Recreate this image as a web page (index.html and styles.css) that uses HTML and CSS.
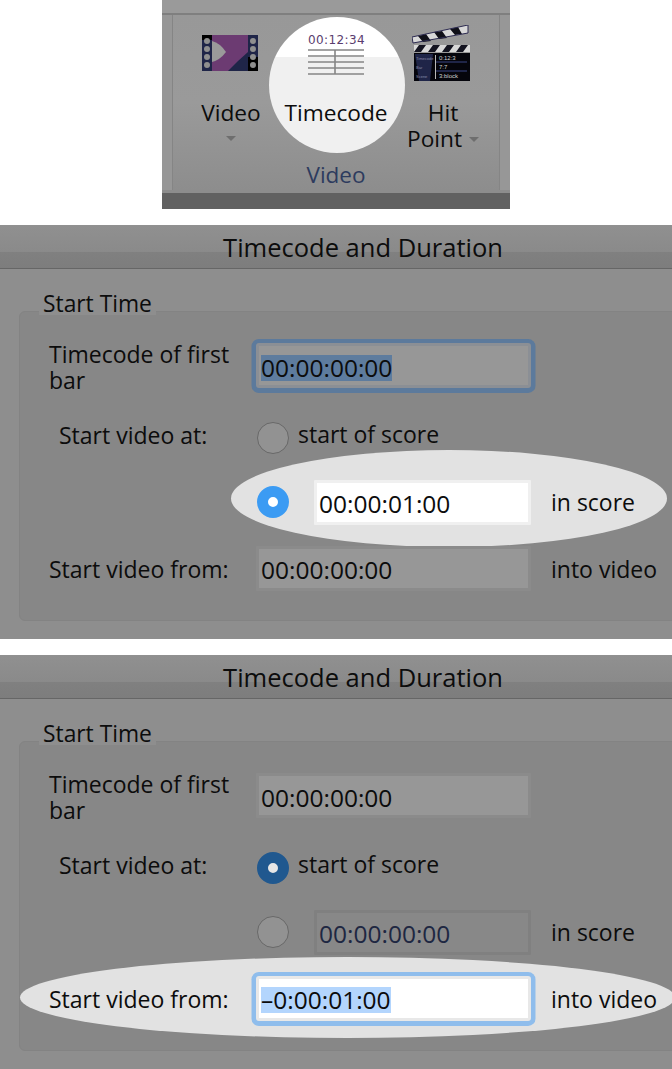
FILE: index.html
```html
<!DOCTYPE html>
<html lang="en">
<head>
<meta charset="utf-8">
<title>Timecode and Duration</title>
<link rel="stylesheet" href="styles.css">
</head>
<body>
<section class="ribbon">
  <div class="ribbon-top"></div>
  <div class="ribbon-body">
    <div class="tools">
      <div class="tool tool-video">
        <div class="icon icon-video">
          <svg width="56" height="36" viewBox="0 0 56 36">
            <rect width="56" height="36" fill="#1f2548"/>
            <rect x="0" y="0" width="10" height="5" fill="#000"/>
            <rect x="46" y="22" width="10" height="14" fill="#000"/>
            <rect x="10" width="36" height="36" fill="#6c3b72"/>
            <path d="M10 6 Q18 8 24 17 Q18 25 10 27Z" fill="#9a9a9a"/>
            <path d="M26 36 L36 26 L46 17 V36Z" fill="#1f2548"/>
            <g fill="#8f8f8f">
              <circle cx="5" cy="6" r="3"/><circle cx="5" cy="14" r="3"/><circle cx="5" cy="22" r="3"/><circle cx="5" cy="30" r="3"/>
              <circle cx="51" cy="6" r="3"/><circle cx="51" cy="14" r="3"/><circle cx="51" cy="22" r="3"/><circle cx="51" cy="30" r="3"/>
            </g>
          </svg>
        </div>
        <div class="tool-label">Video</div>
        <span class="caret caret-below"></span>
      </div>
      <div class="tool tool-timecode">
        <div class="spot"></div>
        <div class="icon">
          <div class="tc-icon">
            <div class="tc-time">00:12:34</div>
            <svg width="56" height="26" viewBox="0 0 56 26">
              <g stroke="#858585" stroke-width="1.6">
                <path d="M0 1H56M0 7H56M0 13H56M0 19H56M0 25H56"/>
                <path d="M27 1V25"/>
              </g>
            </svg>
          </div>
        </div>
        <div class="tool-label">Timecode</div>
      </div>
      <div class="tool tool-hit">
        <div class="icon icon-hit">
          <svg width="58" height="56" viewBox="0 0 58 56">
            <path d="M0 12 L56 0 L56 8 L1 18Z" fill="#d8d8d8"/>
            <path d="M6 11 L14 9 L19 16 L11 17ZM22 7 L30 6 L35 13 L27 14ZM38 4 L46 2 L50 9 L43 10Z" fill="#101018"/>
            <path d="M0 12 L56 0 L56 8 L1 18Z" fill="none" stroke="#2c2a50" stroke-width="1"/>
            <rect x="2" y="20" width="56" height="7" fill="#d8d8d8"/>
            <path d="M2 27 L7 20H14L9 27ZM16 27 L21 20H28L23 27ZM30 27 L35 20H42L37 27ZM44 27 L49 20H56L51 27Z" fill="#141420"/>
            <rect x="2" y="28" width="56" height="28" fill="#05050c"/>
            <path d="M3 29H21L18 56H7Z" fill="#1f2548"/>
            <rect x="23" y="30" width="1" height="24" fill="#b8b8b8"/>
            <rect x="24" y="36" width="31" height="2" fill="#1f2548"/>
            <rect x="24" y="45" width="31" height="2" fill="#1f2548"/>
            <g class="clap-text">
              <text x="4" y="35">Timecode</text>
              <text x="4" y="44">Bar</text>
              <text x="4" y="53">Scene</text>
            </g>
            <g class="clap-value">
              <text x="27" y="35">0:12:3</text>
              <text x="27" y="44">7:7</text>
              <text x="27" y="53">3:block</text>
            </g>
          </svg>
        </div>
        <div class="tool-label">Hit<br>Point<span class="caret caret-inline"></span></div>
      </div>
    </div>
    <div class="group-name">Video</div>
  </div>
  <div class="ribbon-foot"></div>
</section>

<section class="panel">
  <header class="panel-title">Timecode and Duration</header>
  <div class="group">
    <div class="legend">Start Time</div>
    <div class="ellipse ellipse-score"></div>
    <div class="row row-first">
      <label class="label label-two">Timecode of first<br>bar</label>
      <div class="field is-focus-dim"><span class="sel-dim">00:00:00:00</span></div>
    </div>
    <div class="row row-at">
      <label class="label label-indent">Start video at:</label>
      <div class="choice"><span class="radio"></span><span class="choice-text">start of score</span></div>
    </div>
    <div class="row row-score">
      <span></span>
      <div class="choice choice-field"><span class="radio radio-on"></span><div class="field field-short field-live">00:00:01:00</div></div>
      <span class="unit">in score</span>
    </div>
    <div class="row row-from">
      <label class="label">Start video from:</label>
      <div class="field">00:00:00:00</div>
      <span class="unit">into video</span>
    </div>
  </div>
</section>

<section class="panel">
  <header class="panel-title">Timecode and Duration</header>
  <div class="group">
    <div class="legend">Start Time</div>
    <div class="ellipse ellipse-from"></div>
    <div class="row row-first">
      <label class="label label-two">Timecode of first<br>bar</label>
      <div class="field">00:00:00:00</div>
    </div>
    <div class="row row-at">
      <label class="label label-indent">Start video at:</label>
      <div class="choice"><span class="radio radio-dark"></span><span class="choice-text">start of score</span></div>
    </div>
    <div class="row row-score">
      <span></span>
      <div class="choice choice-field"><span class="radio"></span><div class="field field-short field-off">00:00:00:00</div></div>
      <span class="unit">in score</span>
    </div>
    <div class="row row-from">
      <label class="label">Start video from:</label>
      <div class="field field-live is-focus"><span class="sel">–0:00:01:00</span></div>
      <span class="unit">into video</span>
    </div>
  </div>
</section>
</body>
</html>
```
FILE: styles.css
```css
* { box-sizing: border-box; }
html, body { margin: 0; padding: 0; background: #fff; }
body {
  width: 672px;
  overflow: hidden;
  font-family: "Open Sans", "Liberation Sans", sans-serif;
  color: #0c0c0c;
}

/* Ribbon */
.ribbon {
  width: 348px;
  height: 209px;
  margin-left: 162px;
  display: flex;
  flex-direction: column;
  background: #979797;
}
.ribbon-top {
  height: 15px;
  background: #9a9a9a;
  border-bottom: 2px solid #7f7f7f;
}
.ribbon-body {
  height: 175px;
  margin: 0 10px;
  padding: 10px 0 0 5px;
  border-left: 1px solid #858585;
  border-right: 1px solid #858585;
  background: linear-gradient(#989898, #9a9a9a 50%, #8d8d8d);
}
.ribbon-foot {
  flex: 1;
  background: linear-gradient(#8d8d8d 0, #8d8d8d 3px, #616161 3px);
}
.tools { display: flex; height: 127px; }
.tool {
  position: relative;
  display: flex;
  flex-direction: column;
  align-items: center;
}
.tool-video { width: 106px; }
.tool-timecode { width: 104px; }
.tool-hit { width: 110px; }
.icon {
  position: relative;
  height: 56px;
  margin-bottom: 19px;
  display: flex;
  align-items: center;
}
.icon-video { margin-left: -2px; }
.icon-hit { margin-left: -4px; }
.icon svg { display: block; }
.tool-label {
  position: relative;
  font-size: 22.7px;
  line-height: 26px;
  text-align: center;
  white-space: nowrap;
}
.spot {
  position: absolute;
  left: -15px;
  top: -8px;
  width: 136px;
  height: 136px;
  border-radius: 50%;
  background: linear-gradient(#fff 0, #fff 40px, #f0f0f0 40px);
}
.tc-icon { width: 56px; }
.tc-time {
  font-family: "DejaVu Sans", sans-serif;
  font-size: 12px;
  line-height: 16px;
  letter-spacing: 0.4px;
  color: #5a3d6e;
  text-align: center;
  white-space: nowrap;
  margin-bottom: 1px;
}
.clap-text text { font-family: "Liberation Sans", sans-serif; font-size: 4px; fill: #8a8aa8; }
.clap-value text { font-family: "Liberation Sans", sans-serif; font-size: 6px; fill: #d0d0d0; }
.caret {
  display: inline-block;
  width: 0;
  height: 0;
  border-left: 5px solid transparent;
  border-right: 5px solid transparent;
  border-top: 5px solid #6e6e6e;
}
.caret-below { margin-top: 10px; }
.caret-inline { margin-left: 7px; vertical-align: 5px; }
.group-name {
  font-size: 22.5px;
  line-height: 26px;
  text-align: center;
  color: #2d3b5e;
  margin-left: -5px;
  padding-top: 10px;
}

/* Panels */
.panel {
  position: relative;
  height: 414px;
  margin-top: 16px;
  overflow: hidden;
  background: #8e8e8e;
}
.panel-title {
  height: 44px;
  font-size: 25.5px;
  line-height: 45px;
  text-align: center;
  margin-bottom: 42px;
  padding-left: 54px;
  background: linear-gradient(#909090 0, #8a8a8a 27px, #808080 27px, #7d7d7d 43px);
  border-bottom: 1px solid #666;
}
.group {
  position: relative;
  width: 680px;
  height: 310px;
  margin-left: 19px;
  padding-top: 31px;
  background: #878787;
  border-radius: 6px;
  border: 1px solid #838383;
}
.legend {
  position: absolute;
  left: 19px;
  top: -21px;
  height: 24px;
  padding: 0 4px;
  font-size: 22.8px;
  line-height: 26px;
  background: #8e8e8e;
}
.ellipse {
  position: absolute;
  background: #e2e2e2;
  border-radius: 50%;
}
.ellipse-score { left: 211px; top: 138px; width: 436px; height: 97px; }
.ellipse-from { left: 0; top: 215px; width: 655px; height: 81px; }

.row {
  position: relative;
  display: grid;
  grid-template-columns: 236px 275px 1fr;
  align-items: center;
}
.row-first { grid-template-rows: 45px; height: 45px; }
.row-at { grid-template-rows: 33px; height: 33px; margin-top: 33px; }
.row-score { grid-template-rows: 46px; height: 46px; margin-top: 25px; }
.row-from { grid-template-rows: 45px; height: 45px; margin-top: 21px; }
.label {
  padding-left: 29px;
  font-size: 23px;
  line-height: 26px;
  white-space: nowrap;
}
.label-two { padding-top: 3px; }
.label-indent { padding-left: 39px; padding-bottom: 6px; }
.unit {
  padding-left: 20px;
  font-size: 23px;
  line-height: 26px;
  white-space: nowrap;
}
.field {
  display: flex;
  align-items: center;
  width: 275px;
  height: 45px;
  padding: 3px 0 0 2px;
  border: 3px solid #8b8b8b;
  border-radius: 1px;
  background: #979797;
  font-size: 24.5px;
  line-height: 26px;
  white-space: nowrap;
}
.row-first .field { padding-top: 5px; }
.field-short { width: 217px; }
.field-live { background: #fff; border-color: #f0f0f0; }
.field-off { border-color: #808080; background: #888; color: #1e2742; }
.is-focus { box-shadow: 0 0.5px 0 4.5px #8fbdec; border-color: #e8e8e8; border-radius: 3px; }
.is-focus-dim { box-shadow: 0 0.5px 0 4.5px #5c7a9c; border-color: #8b8f95; border-radius: 3px; }
.sel { background: #b3d5fd; }
.sel-dim { background: #5e7c9e; }
.choice { display: flex; align-items: center; padding-left: 1px; }
.choice-field { gap: 25px; }
.choice-text { margin-left: 9px; padding-bottom: 8px; font-size: 23px; line-height: 26px; white-space: nowrap; }
.radio {
  flex: none;
  width: 32px;
  height: 32px;
  border-radius: 50%;
  background: #929292;
  border: 1px solid #686868;
}
.radio-on { border: 11px solid #3b9bf3; background: #fff; }
.radio-dark { border: 11px solid #20588f; background: #e6e6e6; }
```
